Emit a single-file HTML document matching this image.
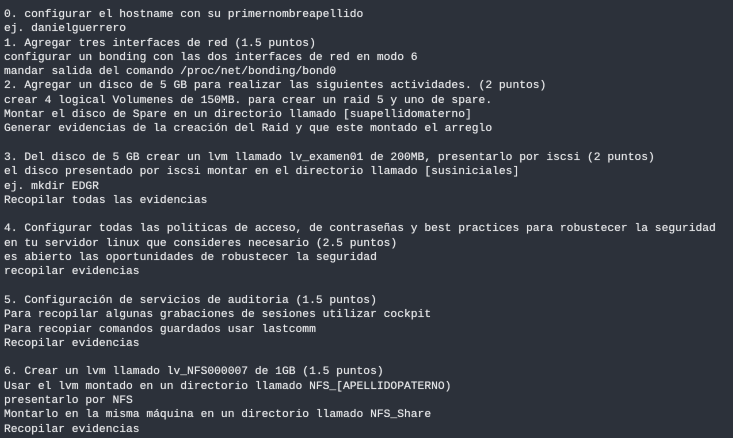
<!DOCTYPE html>
<html><head><meta charset="utf-8"><style>
html,body{margin:0;padding:0;background:#2c313a;width:733px;height:438px;overflow:hidden}
pre{margin:0;position:absolute;left:4px;top:8px;font-family:"Liberation Mono",monospace;font-size:11.3px;line-height:14.3px;color:#e2e3e5;white-space:pre;text-shadow:0 0 0.6px #e2e3e5}
</style></head><body><pre>0. configurar el hostname con su primernombreapellido
ej. danielguerrero
1. Agregar tres interfaces de red (1.5 puntos)
configurar un bonding con las dos interfaces de red en modo 6
mandar salida del comando /proc/net/bonding/bond0
2. Agregar un disco de 5 GB para realizar las siguientes actividades. (2 puntos)
crear 4 logical Volumenes de 150MB. para crear un raid 5 y uno de spare.
Montar el disco de Spare en un directorio llamado [suapellidomaterno]
Generar evidencias de la creación del Raid y que este montado el arreglo

3. Del disco de 5 GB crear un lvm llamado lv_examen01 de 200MB, presentarlo por iscsi (2 puntos)
el disco presentado por iscsi montar en el directorio llamado [susiniciales]
ej. mkdir EDGR
Recopilar todas las evidencias

4. Configurar todas las politicas de acceso, de contraseñas y best practices para robustecer la seguridad
en tu servidor linux que consideres necesario (2.5 puntos)
es abierto las oportunidades de robustecer la seguridad
recopilar evidencias

5. Configuración de servicios de auditoria (1.5 puntos)
Para recopilar algunas grabaciones de sesiones utilizar cockpit
Para recopiar comandos guardados usar lastcomm
Recopilar evidencias

6. Crear un lvm llamado lv_NFS000007 de 1GB (1.5 puntos)
Usar el lvm montado en un directorio llamado NFS_[APELLIDOPATERNO)
presentarlo por NFS
Montarlo en la misma máquina en un directorio llamado NFS_Share
Recopilar evidencias</pre></body></html>
